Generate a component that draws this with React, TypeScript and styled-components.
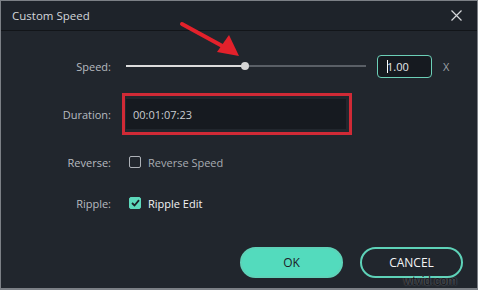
import React from "react";
import styled, { createGlobalStyle } from "styled-components";

const Global = createGlobalStyle`
  html, body { margin: 0; padding: 0; background: #1d2229; }
  * { box-sizing: border-box; }
`;

const Window = styled.div`
  position: relative;
  width: 478px;
  height: 290px;
  border: 1px solid #7c8086;
  border-bottom-width: 2px;
  background: #21262d;
  display: flex;
  flex-direction: column;
  font-family: "Open Sans", "Noto Sans", sans-serif;
  overflow: hidden;
`;

const TitleBar = styled.div`
  height: 30px;
  flex: none;
  display: flex;
  align-items: center;
  justify-content: space-between;
  padding: 0 11px 1px 11px;
  background: #1e232a;
  border-bottom: 1px solid #121519;
`;

const Title = styled.span`
  color: #d3d6da;
  font-size: 11.5px;
`;

const CloseButton = styled.button`
  border: none;
  background: transparent;
  padding: 0;
  width: 12px;
  height: 12px;
  display: flex;
  align-items: center;
  justify-content: center;
  margin-right: 4px;
  cursor: pointer;
`;

const Body = styled.div`
  padding-top: 23px;
  display: flex;
  flex-direction: column;
`;

const Row = styled.div<{ $h: number; $mt: number }>`
  display: grid;
  grid-template-columns: 110px 1fr;
  column-gap: 15px;
  align-items: center;
  height: ${(p) => p.$h}px;
  margin-top: ${(p) => p.$mt}px;
`;

const Label = styled.span`
  text-align: right;
  color: #b7bbc0;
  font-size: 11px;
`;

const Controls = styled.div`
  display: flex;
  align-items: center;
`;

const Track = styled.div`
  position: relative;
  width: 240px;
  height: 2px;
  background: #5a5f66;
`;

const TrackFill = styled.div`
  height: 100%;
  background: #dcdcdc;
`;

const Thumb = styled.div`
  position: absolute;
  top: 50%;
  width: 8px;
  height: 8px;
  margin-left: -4px;
  margin-top: -4px;
  border-radius: 50%;
  background: #d6d6d6;
`;

const SpeedInput = styled.div`
  margin-left: 11px;
  width: 55px;
  height: 23px;
  border: 1px solid #6ccfb7;
  border-radius: 4px;
  background: #161a20;
  display: flex;
  align-items: center;
  padding-left: 9px;
  color: #e6e7e9;
  font-size: 11px;
`;

const Caret = styled.span`
  display: inline-block;
  width: 1px;
  height: 13px;
  background: #ffffff;
  margin-right: -1px;
`;

const Multiplier = styled.span`
  margin-left: 11px;
  color: #9ca1a7;
  font-size: 11px;
`;

const Highlight = styled.div`
  margin-left: -4px;
  width: fit-content;
  border: 3px solid #d02a36;
  padding: 3px 3px 3px 1px;
`;

const Field = styled.div`
  width: 220px;
  height: 30px;
  background: #161a20;
  display: flex;
  align-items: center;
  padding-left: 7px;
  color: #c9ccd0;
  font-size: 11px;
`;

const CheckRow = styled.label`
  display: flex;
  align-items: center;
  gap: 7px;
  margin-left: 3px;
`;

const Box = styled.span<{ $checked: boolean }>`
  width: 12px;
  height: 12px;
  border-radius: 2px;
  border: 1px solid ${(p) => (p.$checked ? "#5dd8bb" : "#aeb2b8")};
  background: ${(p) => (p.$checked ? "#5dd8bb" : "transparent")};
  display: flex;
  align-items: center;
  justify-content: center;
`;

const CheckText = styled.span<{ $bright: boolean }>`
  color: ${(p) => (p.$bright ? "#f2f3f4" : "#a8acb2")};
  font-size: 11px;
`;

const Footer = styled.div`
  margin-top: auto;
  display: flex;
  justify-content: flex-end;
  gap: 17px;
  padding: 0 14px 10px 0;
`;

const Button = styled.button<{ $primary?: boolean }>`
  width: 103px;
  height: 31px;
  border-radius: 16px;
  font-family: "Open Sans", "Noto Sans", sans-serif;
  font-size: 12px;
  cursor: pointer;
  border: 2px solid #5ed2b8;
  background: ${(p) => (p.$primary ? "#53dbbd" : "transparent")};
  color: ${(p) => (p.$primary ? "#1c2128" : "#f4f5f6")};
`;

const Watermark = styled.span`
  position: absolute;
  right: 20px;
  bottom: 0;
  font-family: "Liberation Sans", Arial, sans-serif;
  font-size: 12px;
  line-height: 14px;
  color: #15181c;
  text-shadow: 0 0 2px rgba(255, 255, 255, 0.45);
`;

const Annotation = styled.svg`
  position: absolute;
  left: -1px;
  top: -1px;
  width: 478px;
  height: 290px;
  pointer-events: none;
`;

const speed = 0.496;

export default function App() {
  return (
    <>
      <Global />
      <Window>
        <TitleBar>
          <Title>Custom Speed</Title>
          <CloseButton aria-label="Close">
            <svg width="11" height="11" viewBox="0 0 11 11">
              <path d="M0.5 0.5 L10.5 10.5 M10.5 0.5 L0.5 10.5" stroke="#d6d8db" strokeWidth="1.2" />
            </svg>
          </CloseButton>
        </TitleBar>
        <Body>
          <Row $h={24} $mt={0}>
            <Label>Speed:</Label>
            <Controls>
              <Track>
                <TrackFill style={{ width: `${speed * 100}%` }} />
                <Thumb style={{ left: `${speed * 100}%` }} />
              </Track>
              <SpeedInput>
                <Caret />
                1.00
              </SpeedInput>
              <Multiplier>X</Multiplier>
            </Controls>
          </Row>
          <Row $h={42} $mt={15}>
            <Label>Duration:</Label>
            <Controls>
              <Highlight>
                <Field>00:01:07:23</Field>
              </Highlight>
            </Controls>
          </Row>
          <Row $h={20} $mt={17}>
            <Label>Reverse:</Label>
            <CheckRow>
              <Box $checked={false} />
              <CheckText $bright={false}>Reverse Speed</CheckText>
            </CheckRow>
          </Row>
          <Row $h={20} $mt={21}>
            <Label>Ripple:</Label>
            <CheckRow>
              <Box $checked>
                <svg width="9" height="8" viewBox="0 0 9 8">
                  <path d="M1 4 L3.5 6.5 L8 1.2" stroke="#1b2027" strokeWidth="1.8" fill="none" />
                </svg>
              </Box>
              <CheckText $bright>Ripple Edit</CheckText>
            </CheckRow>
          </Row>
        </Body>
        <Footer>
          <Button $primary>OK</Button>
          <Button>CANCEL</Button>
        </Footer>
        <Watermark>wtvid.com</Watermark>
        <Annotation viewBox="0 0 478 290">
          <line x1="182" y1="24" x2="226" y2="48" stroke="#e3212b" strokeWidth="4" strokeLinecap="round" />
          <polygon points="239,56 217,52 229,35" fill="#e3212b" />
        </Annotation>
      </Window>
    </>
  );
}
